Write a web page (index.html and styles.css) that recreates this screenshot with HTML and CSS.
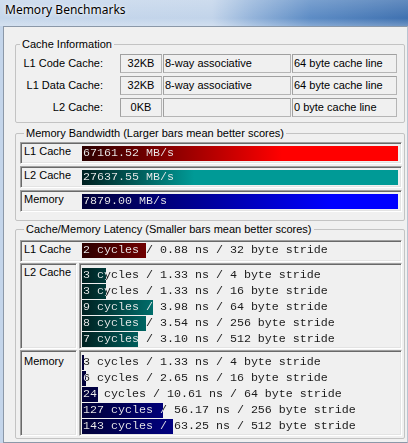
FILE: index.html
```html
<!DOCTYPE html>
<html>
<head>
<meta charset="utf-8">
<title>Memory Benchmarks</title>
<link rel="stylesheet" href="styles.css">
</head>
<body>
<div class="window">
  <div class="titlebar"><span class="title">Memory Benchmarks</span></div>
  <div class="client">
    <fieldset class="group info">
      <legend>Cache Information</legend>
      <div class="info-grid">
        <div class="lbl">L1 Code Cache:</div><div class="val c">32KB</div><div class="val">8-way associative</div><div class="val">64 byte cache line</div>
        <div class="lbl">L1 Data Cache:</div><div class="val c">32KB</div><div class="val">8-way associative</div><div class="val">64 byte cache line</div>
        <div class="lbl">L2 Cache:</div><div class="val c">0KB</div><div class="val"></div><div class="val">0 byte cache line</div>
      </div>
    </fieldset>

    <fieldset class="group bw">
      <legend>Memory Bandwidth (Larger bars mean better scores)</legend>
      <div class="frame row">
        <div class="rlbl">L1 Cache</div>
        <div class="bar red" style="--w:100%"><span class="txt">67161.52 MB/s</span></div>
      </div>
      <div class="frame row">
        <div class="rlbl">L2 Cache</div>
        <div class="bar teal" style="--w:100%"><span class="txt">27637.55 MB/s</span></div>
      </div>
      <div class="frame row">
        <div class="rlbl">Memory</div>
        <div class="bar blue" style="--w:100%"><span class="txt">7879.00 MB/s</span></div>
      </div>
    </fieldset>

    <fieldset class="group lat">
      <legend>Cache/Memory Latency (Smaller bars mean better scores)</legend>
      <div class="frame row">
        <div class="rlbl">L1 Cache</div>
        <div class="bar red" style="--w:64px"><span class="txt">2 cycles / 0.88 ns / 32 byte stride</span></div>
      </div>

      <div class="lat-block">
        <div class="frame lbl-frame"><div class="rlbl">L2 Cache</div></div>
        <div class="frame data-frame">
          <div class="bar teal" style="--w:24px"><span class="txt">3 cycles / 1.33 ns / 4 byte stride</span></div>
          <div class="bar teal" style="--w:24px"><span class="txt">3 cycles / 1.33 ns / 16 byte stride</span></div>
          <div class="bar teal" style="--w:71px"><span class="txt">9 cycles / 3.98 ns / 64 byte stride</span></div>
          <div class="bar teal" style="--w:64px"><span class="txt">8 cycles / 3.54 ns / 256 byte stride</span></div>
          <div class="bar teal" style="--w:56px"><span class="txt">7 cycles / 3.10 ns / 512 byte stride</span></div>
        </div>
      </div>

      <div class="lat-block">
        <div class="frame lbl-frame"><div class="rlbl mem">Memory</div></div>
        <div class="frame data-frame">
          <div class="bar blue" style="--w:2px"><span class="txt">3 cycles / 1.33 ns / 4 byte stride</span></div>
          <div class="bar blue" style="--w:4px"><span class="txt">6 cycles / 2.65 ns / 16 byte stride</span></div>
          <div class="bar blue" style="--w:16px"><span class="txt">24 cycles / 10.61 ns / 64 byte stride</span></div>
          <div class="bar blue" style="--w:81px"><span class="txt">127 cycles / 56.17 ns / 256 byte stride</span></div>
          <div class="bar blue" style="--w:91px"><span class="txt">143 cycles / 63.25 ns / 512 byte stride</span></div>
        </div>
      </div>
    </fieldset>
  </div>
</div>
</body>
</html>
```

FILE: styles.css
```css
* { box-sizing: border-box; }
html, body { margin: 0; padding: 0; }
body {
  width: 408px;
  height: 443px;
  overflow: hidden;
  background: #c4d5ea;
  font-family: "Liberation Sans", Arial, sans-serif;
  font-size: 11px;
  color: #000;
}
.window {
  display: flex;
  flex-direction: column;
  height: 443px;
}
.titlebar {
  flex: none;
  height: 26px;
  padding: 2px 0 0 5px;
  background:
    linear-gradient(to bottom, rgba(255,255,255,0.18) 0, rgba(255,255,255,0) 70%, rgba(255,255,255,0.25) 100%),
    linear-gradient(to right, #c6d7eb 0%, #c2d4ea 52%, #93b3da 62%, #5d8cc5 76%, #3f71b0 100%);
}
.title {
  font-family: "Noto Sans", "Open Sans", sans-serif;
  font-size: 12px;
  line-height: 16px;
  color: #000;
  text-shadow: 0 0 5px rgba(255,255,255,0.9), 0 0 2px rgba(255,255,255,0.8);
}
.client {
  flex: 1;
  margin-left: 3px;
  border: 1px solid #8b98a8;
  border-right-color: #b8c4d2;
  background: #f0f0f0;
  padding: 11px 2px 0 11px;
}
.group {
  margin: 0;
  min-width: 0;
  padding: 0;
  border: 1px solid #c3c3c3;
  border-radius: 2px;
}
.group legend {
  margin-left: 4px;
  padding: 0 2px;
  line-height: 13px;
  font-size: 11px;
}
.info { padding-bottom: 5px; }
.info-grid {
  margin-top: 3px;
  display: grid;
  grid-template-columns: 103px 42px 128px 105px;
  grid-auto-rows: 19px;
  column-gap: 1px;
  row-gap: 3px;
}
.lbl {
  text-align: right;
  padding-right: 16px;
  line-height: 19px;
}
.val {
  border: 1px solid #b5b5b5;
  border-top-color: #a0a0a0;
  border-left-color: #a0a0a0;
  padding: 0 1px;
  line-height: 17px;
  white-space: nowrap;
  overflow: hidden;
}
.val.c { text-align: center; }

.bw { margin-top: 4px; padding: 0 2px 8px 4px; }
.bw legend { margin-bottom: 2px; }
.frame {
  border: 1px solid;
  border-color: #a0a0a0 #ffffff #ffffff #a0a0a0;
  box-shadow: inset 1px 1px 0 #696969, inset -1px -1px 0 #e3e3e3;
}
.row {
  display: flex;
  align-items: flex-start;
  height: 22px;
  padding: 1px 3px 0 3px;
  margin-bottom: 2px;
}
.row:last-child { margin-bottom: 0; }
.rlbl {
  width: 58px;
  flex: none;
  line-height: 13px;
  padding-top: 1px;
}
.row .bar { flex: 1; margin-top: 2px; }

.bar {
  height: 16px;
  white-space: nowrap;
  overflow: hidden;
  background-repeat: no-repeat;
  background-size: 100% 15px, 316px 15px;
  background-image:
    linear-gradient(to right, transparent var(--w), #f0f0f0 var(--w)),
    var(--grad);
}
.txt {
  display: block;
  padding-left: 1px;
  font-family: "Liberation Mono", "Courier New", monospace;
  font-size: 11.67px;
  line-height: 15px;
  color: #1a1a1a;
  background-image: linear-gradient(to right, #ececec var(--w), #1a1a1a var(--w));
  -webkit-background-clip: text;
  background-clip: text;
  -webkit-text-fill-color: transparent;
}
.red  { --grad: linear-gradient(to right, #2c0000 0, #ff0000 200px, #ff0000 316px); }
.teal { --grad: linear-gradient(to right, #002020 0, #009a96 112px, #009a96 316px); }
.blue { --grad: linear-gradient(to right, #000038 0, #0000ff 250px, #0000ff 316px); }

.lat { margin-top: 2px; padding: 0 2px 2px 4px; }
.lat legend { margin-bottom: 4px; }
.lat .row { margin-bottom: 1px; }
.lat .row .bar { margin-top: 1px; }
.lat-block {
  display: flex;
  gap: 2px;
  height: 86px;
  margin-bottom: 1px;
}
.lat-block:last-child { margin-bottom: 0; }
.lbl-frame {
  width: 57px;
  flex: none;
  padding: 1px 0 0 3px;
}
.rlbl.mem { margin-top: 2px; }
.data-frame {
  flex: 1;
  padding: 4px 3px 0 2px;
}
```
